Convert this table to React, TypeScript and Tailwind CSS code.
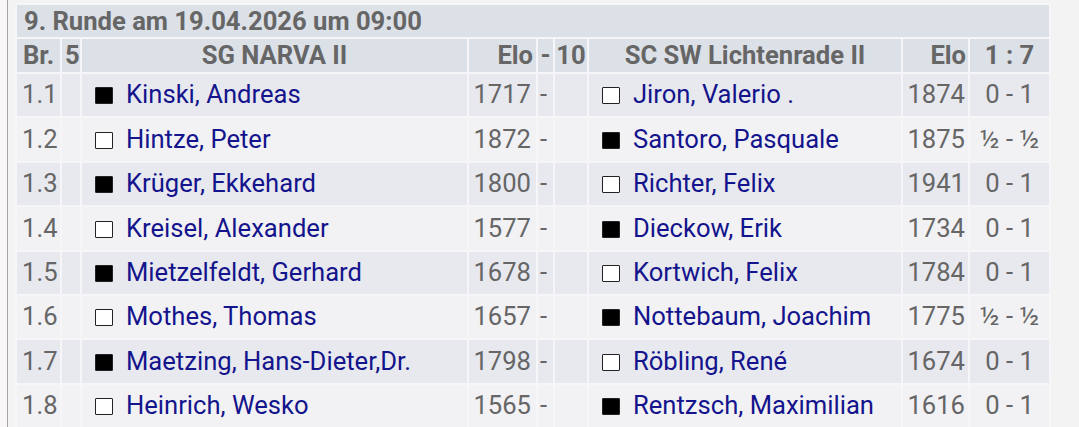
const rows: [string, boolean, string, string, string, string, string][] = [
  ["1.1", true, "Kinski, Andreas", "1717", "Jiron, Valerio .", "1874", "0 - 1"],
  ["1.2", false, "Hintze, Peter", "1872", "Santoro, Pasquale", "1875", "½ - ½"],
  ["1.3", true, "Krüger, Ekkehard", "1800", "Richter, Felix", "1941", "0 - 1"],
  ["1.4", false, "Kreisel, Alexander", "1577", "Dieckow, Erik", "1734", "0 - 1"],
  ["1.5", true, "Mietzelfeldt, Gerhard", "1678", "Kortwich, Felix", "1784", "0 - 1"],
  ["1.6", false, "Mothes, Thomas", "1657", "Nottebaum, Joachim", "1775", "½ - ½"],
  ["1.7", true, "Maetzing, Hans-Dieter,Dr.", "1798", "Röbling, René", "1674", "0 - 1"],
  ["1.8", false, "Heinrich, Wesko", "1565", "Rentzsch, Maximilian", "1616", "0 - 1"],
];

function Square({ black }: { black: boolean }) {
  return (
    <span
      className={`inline-block w-[18px] h-[17px] border-[1.5px] border-[#222] rounded-[1px] align-[-1px] ${
        black ? "bg-black" : "bg-white"
      }`}
    />
  );
}

export default function App() {
  return (
    <div className="min-h-[427px] w-[1079px] bg-[#f8f6f6] font-['Roboto',sans-serif]">
      <div className="ml-[7px] min-h-[427px] border-l border-[#a5a5a5] bg-[#f3f3f4] pt-[3px] pl-[7px] overflow-hidden">
        <table className="table-fixed w-[1036px] border-separate border-spacing-[2px] bg-[#f6f6f8] text-[25.6px] leading-none text-[#666]">
          <colgroup>
            <col className="w-[43px]" />
            <col className="w-[18px]" />
            <col className="w-[385px]" />
            <col className="w-[67px]" />
            <col className="w-[15px]" />
            <col className="w-[32px]" />
            <col className="w-[312px]" />
            <col className="w-[65px]" />
            <col className="w-[79px]" />
          </colgroup>
          <thead>
            <tr>
              <th colSpan={9} className="h-[32px] bg-[#dce0e7] pl-[7px] text-left font-bold pt-[1px]">
                9. Runde am 19.04.2026 um 09:00
              </th>
            </tr>
            <tr className="bg-[#dce0e7] font-bold">
              <th className="h-[33px] pl-[6px] text-left">Br.</th>
              <th className="pl-[3px] text-left">5</th>
              <th className="text-center">SG NARVA II</th>
              <th className="pr-[3px] text-right">Elo</th>
              <th className="text-center">-</th>
              <th className="text-center whitespace-nowrap">10</th>
              <th className="text-center whitespace-nowrap">SC SW Lichtenrade II</th>
              <th className="pr-[2px] text-right">Elo</th>
              <th className="text-center whitespace-nowrap">1 : 7</th>
            </tr>
          </thead>
          <tbody>
            {rows.map(([br, black, home, eloH, guest, eloG, res], i) => (
              <tr key={br} className={i % 2 === 0 ? "bg-[#e8e9ef]" : "bg-[#f2f2f5]"}>
                <td className="h-[42.4px] pl-[5px]">{br}</td>
                <td />
                <td className="pl-[13px] whitespace-nowrap">
                  <Square black={black} />
                  <span className="ml-[13px] text-[#14148c]">{home}</span>
                </td>
                <td className="pr-[5px] text-right">{eloH}</td>
                <td className="pl-[2px]">-</td>
                <td />
                <td className="pl-[13px] whitespace-nowrap">
                  <Square black={!black} />
                  <span className="ml-[13px] text-[#14148c]">{guest}</span>
                </td>
                <td className="pr-[3px] text-right">{eloG}</td>
                <td className="text-center whitespace-nowrap">{res}</td>
              </tr>
            ))}
          </tbody>
        </table>
      </div>
    </div>
  );
}
